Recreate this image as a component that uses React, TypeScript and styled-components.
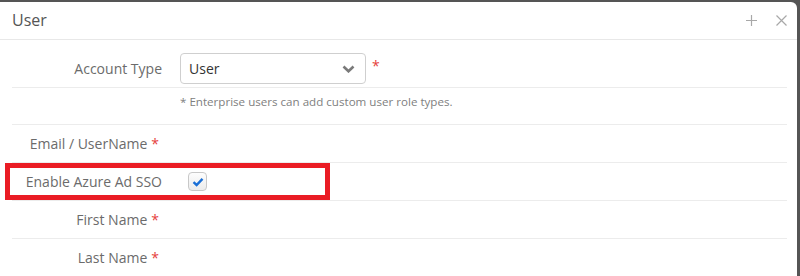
import React from "react";
import styled, { createGlobalStyle } from "styled-components";

const Global = createGlobalStyle`
  html, body { margin: 0; padding: 0; background: #555; }
  body { font-family: "Open Sans", "Liberation Sans", sans-serif; overflow: hidden; }
`;

const Modal = styled.div`
  margin-top: 2px;
  width: 797px;
  height: 274px;
  background: #fff;
  border-top-right-radius: 6px;
  overflow: hidden;
`;

const Header = styled.div`
  height: 37px;
  display: flex;
  align-items: center;
  justify-content: space-between;
  padding: 0 12px;
  border-bottom: 1px solid #e8e8e8;
`;

const Title = styled.div`
  font-size: 16px;
  color: #555;
  margin-top: -1px;
`;

const Tools = styled.div`
  display: flex;
  gap: 19px;
  align-items: center;
  margin-right: -2px;
`;

const Body = styled.div`
  padding: 10px 10px 0 12px;
`;

const Row = styled.div`
  position: relative;
  display: grid;
  grid-template-columns: 150px 1fr;
  column-gap: 18px;
  align-items: center;
  height: 37px;
  border-bottom: 1px solid #ececec;
`;

const HelpRow = styled.div`
  display: grid;
  grid-template-columns: 150px 1fr;
  column-gap: 18px;
  height: 36px;
  border-bottom: 1px solid #ececec;
  align-items: start;
`;

const Label = styled.div<{ $req?: boolean }>`
  text-align: right;
  font-size: 14px;
  color: #6b6b6b;
  white-space: nowrap;
  margin-right: ${(p) => (p.$req ? "3px" : "0")};
`;

const Star = styled.span`
  color: #e5413b;
  margin-left: 4px;
`;

const Control = styled.div`
  display: flex;
  align-items: center;
`;

const Select = styled.div`
  box-sizing: border-box;
  width: 186px;
  height: 31px;
  border: 1px solid #cfcfcf;
  border-radius: 4px;
  display: flex;
  align-items: center;
  justify-content: space-between;
  padding: 0 10px 0 8px;
  font-size: 14px;
  color: #333;
`;

const SelectStar = styled.span`
  color: #e5413b;
  font-size: 14px;
  margin-left: 6px;
  margin-top: -6px;
`;

const Help = styled.div`
  font-size: 11.6px;
  color: #808080;
  padding-top: 6px;
`;

const Check = styled.div`
  box-sizing: border-box;
  width: 19px;
  height: 19px;
  margin-left: 8px;
  border: 1px solid #c8c8c8;
  border-radius: 4px;
  background: linear-gradient(#fdfdfd, #ececec);
  display: flex;
  align-items: center;
  justify-content: center;
`;

const Highlight = styled.div`
  position: absolute;
  left: -7px;
  top: 0px;
  width: 325px;
  height: 37px;
  box-sizing: border-box;
  border: 5px solid #ea1c24;
  pointer-events: none;
`;

export default function App() {
  return (
    <>
      <Global />
      <Modal>
        <Header>
          <Title>User</Title>
          <Tools>
            <svg width="11" height="11" viewBox="0 0 11 11">
              <path d="M5.5 0V11M0 5.5H11" stroke="#a8a8a8" strokeWidth="1.2" />
            </svg>
            <svg width="11" height="11" viewBox="0 0 11 11">
              <path d="M0.5 0.5L10.5 10.5M10.5 0.5L0.5 10.5" stroke="#a8a8a8" strokeWidth="1.2" />
            </svg>
          </Tools>
        </Header>
        <Body>
          <Row>
            <Label>Account Type</Label>
            <Control>
              <Select>
                <span>User</span>
                <svg width="13" height="8" viewBox="0 0 13 8">
                  <path d="M1.5 1.5L6.5 6.3L11.5 1.5" fill="none" stroke="#7a7a7a" strokeWidth="2.6" />
                </svg>
              </Select>
              <SelectStar>*</SelectStar>
            </Control>
          </Row>
          <HelpRow>
            <div />
            <Help>* Enterprise users can add custom user role types.</Help>
          </HelpRow>
          <Row>
            <Label $req>
              Email / UserName<Star>*</Star>
            </Label>
            <div />
          </Row>
          <Row>
            <Label>Enable Azure Ad SSO</Label>
            <Control>
              <Check>
                <svg width="12" height="10" viewBox="0 0 12 10">
                  <path d="M1.5 5.2L4.6 8L10.5 1.8" fill="none" stroke="#1a6fd6" strokeWidth="2.4" />
                </svg>
              </Check>
            </Control>
            <Highlight />
          </Row>
          <Row>
            <Label $req>
              First Name<Star>*</Star>
            </Label>
            <div />
          </Row>
          <Row>
            <Label $req>
              Last Name<Star>*</Star>
            </Label>
            <div />
          </Row>
        </Body>
      </Modal>
    </>
  );
}
